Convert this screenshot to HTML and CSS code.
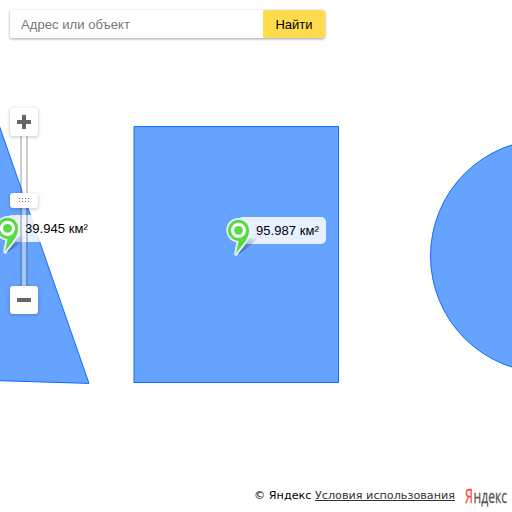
FILE: index.html
```
<!DOCTYPE html>
<html lang="ru">
<head>
<meta charset="utf-8">
<title>Карта</title>
<link rel="stylesheet" href="styles.css">
</head>
<body>
<main class="map">
  <svg class="shapes" width="512" height="512" viewBox="0 0 512 512">
    <path d="M-20 70.3 89 383.4-20 380.1Z"/>
    <path d="M134 126.5H338.5V382.5H134Z"/>
    <circle cx="547" cy="256" r="116.5"/>
  </svg>

  <svg class="defs" width="0" height="0">
    <defs>
      <linearGradient id="shade" x1="0" y1="1" x2="1" y2="0">
        <stop offset="0" stop-color="#163f80" stop-opacity=".75"/>
        <stop offset="1" stop-color="#40628f" stop-opacity="0"/>
      </linearGradient>
      <g id="pin">
        <path d="M12 38 21 22 33 20.5Q28 28 12 38Z" fill="url(#shade)"/>
        <path d="M13.5 1A12.3 12.3 0 0 0 11.4 25.4L9.2 36.6Q9.4 39.8 12.4 38.2C16.5 31.5 25.8 24 25.8 13.3A12.3 12.3 0 0 0 13.5 1Z" fill="#e6f0f4"/>
        <path d="M13.5 2.7A10.6 10.6 0 1 0 13.7 23.9L10.9 36.8C15 30 24.1 23 24.1 13.3A10.6 10.6 0 0 0 13.5 2.7Z" fill="#56db40"/>
        <circle cx="13.5" cy="13.3" r="7.6" fill="#fff"/>
        <circle cx="13.5" cy="13.3" r="4.4" fill="#56db40"/>
      </g>
    </defs>
  </svg>

  <div class="placemark placemark-triangle">
    <span class="label">39.945 км²</span>
    <svg class="pin" width="36" height="42"><use href="#pin"/></svg>
  </div>
  <div class="placemark placemark-square">
    <span class="label">95.987 км²</span>
    <svg class="pin" width="36" height="42"><use href="#pin"/></svg>
  </div>

  <div class="overlay">
    <form class="search">
      <input class="query" type="text" placeholder="Адрес или объект">
      <button class="find" type="button">Найти</button>
    </form>
    <div class="zoom">
      <button class="zoom-button" type="button" aria-label="Приблизить">
        <svg width="14" height="14"><path d="M5 0h4v5h5v4H9v5H5V9H0V5h5Z"/></svg>
      </button>
      <div class="track">
        <div class="runner">
          <svg width="11" height="5"><path d="M0 0h1v1H0ZM3 0h1v1H3ZM6 0h1v1H6ZM9 0h1v1H9ZM0 3h1v1H0ZM3 3h1v1H3ZM6 3h1v1H6ZM9 3h1v1H9Z"/></svg>
        </div>
      </div>
      <button class="zoom-button" type="button" aria-label="Отдалить">
        <svg width="14" height="14"><path d="M0 5h14v4H0Z"/></svg>
      </button>
    </div>
    <footer class="copyright">
      <span>© Яндекс <a class="terms">Условия использования</a></span>
      <svg class="logo" width="44" height="26" viewBox="0 0 44 26">
        <text class="logo-text" y="20.5"><tspan class="logo-first" x="0" textLength="8" lengthAdjust="spacingAndGlyphs">Я</tspan><tspan x="8.6" textLength="33.6" lengthAdjust="spacingAndGlyphs">ндекс</tspan></text>
      </svg>
    </footer>
  </div>
</main>
</body>
</html>
```
FILE: styles.css
```
* { box-sizing: border-box; }
body { margin: 0; background: #fff; }
svg { display: block; }
.map {
  position: relative;
  width: 512px;
  height: 512px;
  overflow: hidden;
  font: 13px/16px "Liberation Sans", Arial, sans-serif;
  color: #000;
}
.shapes { position: absolute; inset: 0; fill: #66a3ff; stroke: #0f6cff; stroke-width: 1; }
.defs { position: absolute; }

.placemark { position: absolute; top: 217px; }
.placemark-triangle { left: 7px; top: 215px; }
.placemark-square { left: 238px; }
.label {
  display: block;
  height: 27px;
  padding: 6px 7px 5px 18px;
  border-radius: 5px;
  background: rgba(255, 255, 255, .84);
  letter-spacing: .06px;
  white-space: nowrap;
}
.pin { position: absolute; left: -13px; top: 0; }

.overlay {
  position: relative;
  display: flex;
  flex-direction: column;
  align-items: flex-start;
  height: 512px;
  padding: 10px 4px 4px 10px;
}
.search {
  display: flex;
  width: 315px;
  height: 28px;
  border-radius: 3px;
  box-shadow: 0 1px 2px 1px rgba(0, 0, 0, .15), 0 1px 3px -1px rgba(0, 0, 0, .3);
}
.query {
  flex: 1;
  min-width: 0;
  padding: 1px 11px 0;
  border: 0;
  border-radius: 3px 0 0 3px;
  background: #fff;
  font: inherit;
  letter-spacing: .06px;
}
.query::placeholder { color: #777; }
.find {
  width: 62px;
  padding: 1px 0 0;
  border: 0;
  border-radius: 0 3px 3px 0;
  background: #ffdb4d;
  font: inherit;
  color: #000;
}
.zoom { display: flex; flex-direction: column; align-items: center; width: 28px; margin-top: 70px; }
.zoom-button, .runner {
  display: flex;
  align-items: center;
  justify-content: center;
  width: 28px;
  height: 28px;
  padding: 0;
  border: 0;
  border-radius: 3px;
  background: #fff;
  box-shadow: 0 1px 3px 1px rgba(0, 0, 0, .15);
  fill: #666;
}
.track {
  display: flex;
  justify-content: center;
  width: 8px;
  height: 150px;
  padding-top: 57px;
  border: solid rgba(90, 90, 90, .3);
  border-width: 0 2px;
  background: rgba(255, 255, 255, .4);
  background-clip: padding-box;
}
.runner { flex: none; height: 15px; }
.copyright {
  display: flex;
  align-items: center;
  align-self: flex-end;
  gap: 10px;
  height: 26px;
  margin-top: auto;
  font: 11.2px/14px "DejaVu Sans", Verdana, sans-serif;
  white-space: nowrap;
}
.copyright span { margin-top: 1px; }
.terms { color: #333; text-decoration: underline; }
.logo { flex: none; margin-right: -1px; overflow: visible; }
.logo-text { fill: #555; stroke: #555; stroke-width: .3; font: 18px "Open Sans", sans-serif; }
.logo-first { fill: #f44; stroke: #f44; font-size: 20.5px; }
```
